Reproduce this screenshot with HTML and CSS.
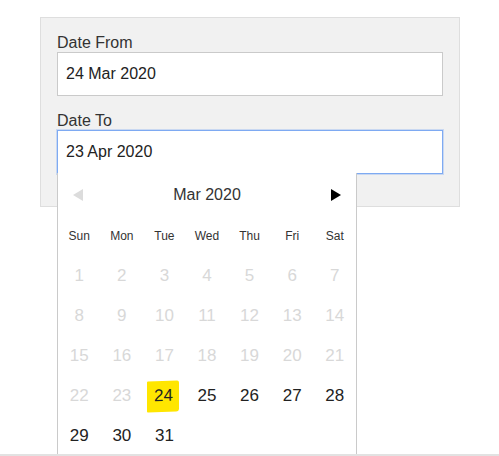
FILE: index.html
```html
<!DOCTYPE html>
<html lang="en">
<head>
    <meta charset="UTF-8">
    <meta name="viewport" content="width=device-width, initial-scale=1.0">
    <title>Date Range</title>
    <link rel="stylesheet" href="styles.css">
</head>
<body>
    <div class="page">
        <div class="range-panel">
            <label class="field-label" for="dateFrom">Date From</label>
            <input type="text" id="dateFrom" class="date-input" value="24 Mar 2020">

            <label class="field-label field-label-to" for="dateTo">Date To</label>
            <div class="picker-wrap">
                <input type="text" id="dateTo" class="date-input is-focused" value="23 Apr 2020">

                <div class="calendar">
                    <div class="cal-header">
                        <span class="cal-arrow cal-prev"></span>
                        <span class="cal-title">Mar 2020</span>
                        <span class="cal-arrow cal-next"></span>
                    </div>
                    <div class="cal-grid">
                        <div class="cal-dow">Sun</div>
                        <div class="cal-dow">Mon</div>
                        <div class="cal-dow">Tue</div>
                        <div class="cal-dow">Wed</div>
                        <div class="cal-dow">Thu</div>
                        <div class="cal-dow">Fri</div>
                        <div class="cal-dow">Sat</div>

                        <div class="cal-day off">1</div>
                        <div class="cal-day off">2</div>
                        <div class="cal-day off">3</div>
                        <div class="cal-day off">4</div>
                        <div class="cal-day off">5</div>
                        <div class="cal-day off">6</div>
                        <div class="cal-day off">7</div>

                        <div class="cal-day off">8</div>
                        <div class="cal-day off">9</div>
                        <div class="cal-day off">10</div>
                        <div class="cal-day off">11</div>
                        <div class="cal-day off">12</div>
                        <div class="cal-day off">13</div>
                        <div class="cal-day off">14</div>

                        <div class="cal-day off">15</div>
                        <div class="cal-day off">16</div>
                        <div class="cal-day off">17</div>
                        <div class="cal-day off">18</div>
                        <div class="cal-day off">19</div>
                        <div class="cal-day off">20</div>
                        <div class="cal-day off">21</div>

                        <div class="cal-day off">22</div>
                        <div class="cal-day off">23</div>
                        <div class="cal-day"><span class="selected">24</span></div>
                        <div class="cal-day">25</div>
                        <div class="cal-day">26</div>
                        <div class="cal-day">27</div>
                        <div class="cal-day">28</div>

                        <div class="cal-day">29</div>
                        <div class="cal-day">30</div>
                        <div class="cal-day">31</div>
                    </div>
                </div>
            </div>
        </div>
    </div>
    <div class="page-edge"></div>
</body>
</html>
```

FILE: styles.css
```css
html, body {
    height: 100%;
}

body {
    margin: 0;
    padding: 0;
    min-height: 456px;
    background-color: #fff;
    font-family: "Liberation Sans", Arial, sans-serif;
    color: #222;
}

.page {
    padding: 17px 40px 0;
}

.range-panel {
    width: 386px;
    padding: 16px 16px 32px;
    background-color: #f1f1f1;
    border: 1px solid #dedede;
}

.field-label {
    display: block;
    font-size: 16px;
    line-height: 18px;
    color: #333;
}

.field-label-to {
    margin-top: 16px;
}

.date-input {
    display: block;
    box-sizing: border-box;
    width: 386px;
    height: 44px;
    margin: 0;
    padding: 0 8px;
    border: 1px solid #cacaca;
    background-color: #fff;
    font-family: inherit;
    font-size: 16px;
    color: #222;
    outline: none;
}

.date-input.is-focused {
    border-color: #7eaaf2;
    box-shadow: 0 0 0 1px rgba(126, 170, 242, 0.35);
}

.picker-wrap {
    position: relative;
}

.calendar {
    position: absolute;
    top: 43px;
    left: 0;
    width: 298px;
    height: 281px;
    overflow: hidden;
    background-color: #fff;
    border: 1px solid #cacaca;
    border-top: none;
    z-index: 2;
}

.cal-header {
    display: flex;
    align-items: center;
    justify-content: space-between;
    height: 43px;
    padding: 0 15px;
}

.cal-title {
    font-size: 16px;
    color: #333;
}

.cal-arrow {
    width: 0;
    height: 0;
    border-top: 6px solid transparent;
    border-bottom: 6px solid transparent;
}

.cal-prev {
    border-right: 10px solid #dcdcdc;
}

.cal-next {
    border-left: 10px solid #000;
}

.cal-grid {
    display: grid;
    grid-template-columns: repeat(7, 1fr);
    grid-auto-rows: 40px;
}

.cal-dow,
.cal-day {
    display: flex;
    align-items: center;
    justify-content: center;
}

.cal-dow {
    font-size: 12px;
    color: #333;
}

.cal-day {
    font-size: 17px;
    color: #222;
}

.cal-day.off {
    color: #d8d8d8;
}

.selected {
    display: inline-block;
    padding: 5px 6px 6px 7px;
    margin-left: -2px;
    background-color: #ffe600;
    border-radius: 1px 2px 3px 1px;
    transform: skewY(-2deg);
}

.page-edge {
    position: fixed;
    left: 0;
    right: 0;
    bottom: 0;
    height: 2px;
    background-color: #e2e2e2;
    z-index: 3;
}
```
